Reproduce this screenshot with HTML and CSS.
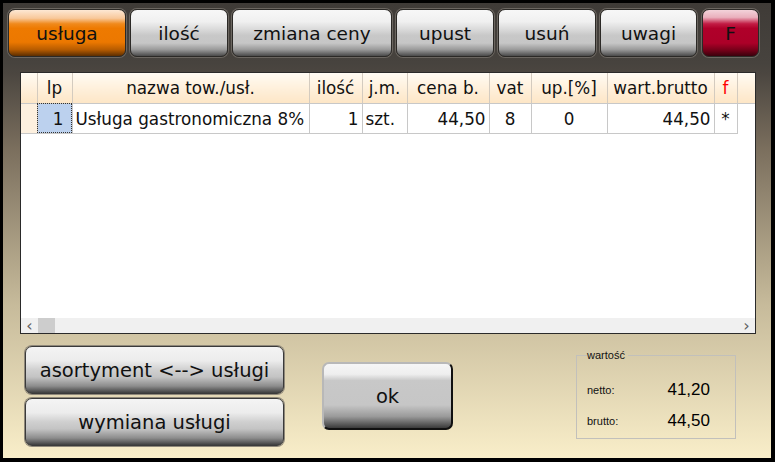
FILE: index.html
```html
<!DOCTYPE html>
<html>
<head>
<meta charset="utf-8">
<link rel="stylesheet" href="styles.css">
</head>
<body>
<div class="frame">
  <div class="toolbar">
    <button class="btn top orange w118">usługa</button>
    <button class="btn top gray w98">ilość</button>
    <button class="btn top gray w160">zmiana ceny</button>
    <button class="btn top gray w98">upust</button>
    <button class="btn top gray w98">usuń</button>
    <button class="btn top gray w97">uwagi</button>
    <button class="btn top red w57">F</button>
  </div>

  <div class="panel">
    <div class="grid-area">
      <table class="grid">
        <colgroup>
          <col class="c-rh"><col class="c-lp"><col class="c-name"><col class="c-qty"><col class="c-jm"><col class="c-price"><col class="c-vat"><col class="c-up"><col class="c-wart"><col class="c-f"><col class="c-fill">
        </colgroup>
        <thead>
          <tr>
            <th></th><th>lp</th><th>nazwa tow./usł.</th><th>ilość</th><th>j.m.</th><th>cena b.</th><th>vat</th><th>up.[%]</th><th>wart.brutto</th><th class="red-f">f</th><th></th>
          </tr>
        </thead>
        <tbody>
          <tr>
            <td class="rh"></td><td class="sel">1</td><td class="left">Usługa gastronomiczna 8%</td><td class="right">1</td><td class="left">szt.</td><td class="right">44,50</td><td class="center">8</td><td class="center">0</td><td class="right">44,50</td><td class="center">*</td><td class="blank"></td>
          </tr>
        </tbody>
      </table>
    </div>
    <div class="hscroll">
      <span class="arrow">&lsaquo;</span>
      <span class="thumb"></span>
      <span class="track"></span>
      <span class="arrow">&rsaquo;</span>
    </div>
  </div>

  <div class="bottom">
    <div class="leftcol">
      <button class="btn low gray">asortyment &lt;--&gt; usługi</button>
      <button class="btn low gray">wymiana usługi</button>
    </div>
    <button class="btn ok">ok</button>
    <fieldset class="sum">
      <legend>wartość</legend>
      <div class="sumrow"><span class="lbl">netto:</span><span class="val">41,20</span></div>
      <div class="sumrow"><span class="lbl">brutto:</span><span class="val">44,50</span></div>
    </fieldset>
  </div>
</div>
</body>
</html>
```

FILE: styles.css
```css
* { box-sizing: border-box; }
html, body { margin: 0; padding: 0; background: #000; }
.frame {
  width: 775px;
  height: 462px;
  border-style: solid;
  border-color: #000;
  border-width: 3px 4px 4px 3px;
  background: linear-gradient(to bottom, #3f3b37 0px, #47433e 60px, #4b4640 70px, #7a6e5d 145px, #c6ba9a 300px, #f9eec9 100%);
  overflow: hidden;
}
.toolbar {
  display: flex;
  gap: 4px;
  padding: 6px 0 0 5px;
  height: 54px;
}
.btn {
  font-family: "DejaVu Sans", Verdana, sans-serif;
  color: #111;
  border-radius: 7px;
  padding: 0;
  margin: 0;
  cursor: default;
}
.top {
  height: 48px;
  font-size: 18.5px;
  border: 1px solid #2b2926;
  box-shadow: 0 0 0 1px #6b6660;
}
.w118 { width: 118px; }
.w98 { width: 98px; }
.w160 { width: 160px; }
.w97 { width: 97px; }
.w57 { width: 57px; margin-left: 1px; }
.gray {
  background: linear-gradient(to bottom, #f7f7f7 0%, #f0f0f0 25%, #dadada 42%, #c8c8c8 55%, #c6c6c6 72%, #9a9a9a 86%, #4a4a4a 100%);
}
.orange {
  background: linear-gradient(to bottom, #fde8d4 0%, #f8c89a 18%, #f08a1c 30%, #ee7a00 40%, #ec7800 70%, #b85c00 86%, #5c2e00 100%);
}
.red {
  background: linear-gradient(to bottom, #f3d3da 0%, #eab0bd 16%, #c21c44 30%, #b0002a 40%, #ac0028 72%, #720018 88%, #3a000c 100%);
}

.panel {
  margin: 15px 0 0 17px;
  width: 736px;
  height: 262px;
  border: 1px solid #2a2a2a;
  background: #fff;
  display: flex;
  flex-direction: column;
}
.grid-area { flex: 1; overflow: hidden; }
.grid {
  border-collapse: collapse;
  table-layout: fixed;
  width: 734px;
  font-family: "DejaVu Sans", Verdana, sans-serif;
  font-size: 16.8px;
  color: #111;
}
.c-rh { width: 16px; }
.c-lp { width: 35px; }
.c-name { width: 237px; }
.c-qty { width: 53px; }
.c-jm { width: 45px; }
.c-price { width: 82px; }
.c-vat { width: 42px; }
.c-up { width: 76px; }
.c-wart { width: 107px; }
.c-f { width: 23px; }
.c-fill { width: 18px; }
.grid th {
  height: 30px;
  font-weight: normal;
  background: linear-gradient(to bottom, #fffbf3 0%, #fff0dc 50%, #fde6c6 100%);
  border-right: 1px solid #d4cbbf;
  border-bottom: 1px solid #c8c8c8;
  padding: 1px 1px 0;
  text-align: center;
  white-space: nowrap;
  overflow: hidden;
}
.grid th:last-child { border-right: none; }
.grid th.red-f { color: #ff0000; }
.grid td {
  height: 30px;
  border-right: 1px solid #c8c8c8;
  border-bottom: 1px solid #c8c8c8;
  padding: 1px 3px 0;
  white-space: nowrap;
  overflow: hidden;
}
.grid td.rh { background: #fdf0df; border-right-color: #d4cbbf; }
.grid td.blank { border-right: none; border-bottom: none; }
.grid td.sel {
  background: #bcd1ee;
  outline: 1px dotted #333;
  outline-offset: -1px;
  text-align: right;
  padding-right: 8px;
}
.left { text-align: left; }
.right { text-align: right; }
.center { text-align: center; }

.hscroll {
  height: 15px;
  background: #f0f0f0;
  display: flex;
  align-items: center;
}
.arrow {
  width: 17px;
  text-align: center;
  font-family: "DejaVu Sans", sans-serif;
  font-size: 16px;
  line-height: 15px;
  color: #606060;
}
.thumb { width: 17px; height: 15px; background: #cdcdcd; }
.track { flex: 1; }

.bottom {
  display: flex;
  align-items: flex-start;
  margin: 12px 0 0 22px;
}
.leftcol {
  display: flex;
  flex-direction: column;
  gap: 4px;
  width: 259px;
}
.low {
  width: 259px;
  height: 48px;
  font-size: 19.5px;
  border: 1px solid #3a3a3a;
  box-shadow: 0 0 0 1px #8f887a;
  background: linear-gradient(to bottom, #f4f4f4 0%, #ececec 30%, #cfcfcf 50%, #c4c4c4 65%, #8c8c8c 85%, #3e3e3e 100%);
}
.ok {
  margin: 16px 0 0 38px;
  width: 131px;
  height: 68px;
  font-size: 19.5px;
  border-style: solid;
  border-width: 2px;
  border-color: #b8b8b8 #101010 #101010 #b8b8b8;
  background: linear-gradient(to bottom, #f6f6f6 0%, #eeeeee 16%, #c8c8c8 26%, #c6c6c6 64%, #9a9a9a 82%, #3a3a3a 100%);
}
.sum {
  margin: 3px 0 0 123px;
  width: 160px;
  height: 90px;
  border: 1px solid #c2c0bb;
  padding: 0 25px 0 10px;
  font-family: "Liberation Sans", Arial, sans-serif;
  min-width: 0;
}
.sum legend {
  font-size: 11px;
  color: #111;
  padding: 0 3px 0 0;
  margin-left: 0;
}
.sumrow {
  display: flex;
  justify-content: space-between;
  align-items: center;
  height: 31px;
}
.sumrow:first-of-type { margin-top: 13px; }
.lbl { font-size: 11px; color: #111; }
.val { font-size: 17px; color: #000; }
```
